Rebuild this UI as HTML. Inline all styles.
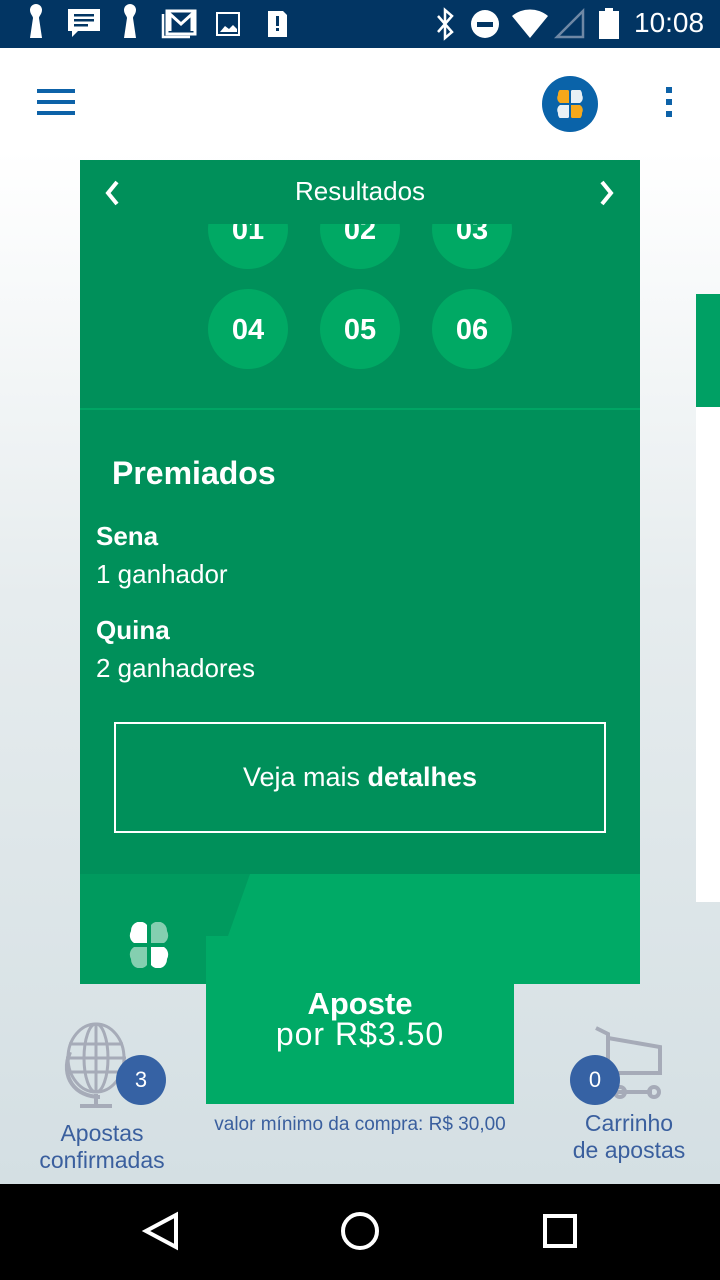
<!DOCTYPE html>
<html><head><meta charset="utf-8"><style>
*{margin:0;padding:0;box-sizing:border-box}
body{width:720px;height:1280px;position:relative;overflow:hidden;font-family:"Liberation Sans",sans-serif;background:linear-gradient(#fff 0,#fff 150px,#e6ecee 600px,#d4dfe3 1184px)}
.abs{position:absolute}
.sb{top:0;left:0;width:720px;height:48px;background:#023563;color:#fff}
.ball{position:absolute;width:80px;height:80px;border-radius:50%;background:#00a964;color:#fff;font-weight:bold;font-size:29px;text-align:center;line-height:82px}
.badge{position:absolute;width:50px;height:50px;border-radius:50%;background:#3662a4;color:#fff;font-size:22px;text-align:center;line-height:50px}
.lbl{position:absolute;color:#3a5f9e;font-size:23px;text-align:center;line-height:27px}
</style></head><body>
<div class="abs sb">
<svg width="720" height="48" class="abs" style="left:0;top:0" fill="#fff">
<path d="M30 10a6 6 0 0 1 12 0c0 4-3 6-3 8l3 20h-12l3-20c0-2-3-4-3-8z"/>
<path d="M68 9h32v22h-22l-6 6v-6h-4z"/><rect x="74" y="14" width="20" height="2.5" fill="#023563"/><rect x="74" y="19" width="20" height="2.5" fill="#023563"/><rect x="74" y="24" width="14" height="2.5" fill="#023563"/>
<path d="M124 10a6 6 0 0 1 12 0c0 4-3 6-3 8l3 20h-12l3-20c0-2-3-4-3-8z"/>
<rect x="167" y="11" width="28" height="23" fill="none" stroke="#fff" stroke-width="3"/><path d="M170 31v-17l11 10 11-10v17" fill="none" stroke="#fff" stroke-width="3"/><path d="M163 14v23h27" fill="none" stroke="#fff" stroke-width="2.5"/>
<rect x="217" y="13" width="22" height="22" fill="none" stroke="#fff" stroke-width="2"/><path d="M220 32l5-6 4 3 4-4 4 4v3z"/>
<path d="M268 11h15l4 4v22h-19z"/><rect x="276" y="16" width="3" height="10" fill="#023563"/><rect x="276" y="28" width="3" height="3" fill="#023563"/>
<path d="M438 16l14 16-7 6v-28l7 6-14 16" fill="none" stroke="#fff" stroke-width="2.5"/>
<circle cx="485" cy="24" r="14"/><rect x="477" y="22" width="16" height="5" fill="#023563"/>
<path d="M512 16a28 28 0 0 1 36 0l-18 22z"/>
<path d="M557 37l26-26v26z" fill="none" stroke="#6f88a5" stroke-width="2.5"/>
<rect x="599" y="11" width="20" height="28"/><rect x="605" y="8" width="8" height="4"/>
</svg>
<div class="abs" style="left:634px;top:7px;font-size:28px;color:#fff">10:08</div>
</div>
<div class="abs" style="left:37px;top:89px;width:38px;height:4px;background:#0d62a8;box-shadow:0 11px 0 #0d62a8,0 22px 0 #0d62a8"></div>
<div class="abs" style="left:542px;top:76px;width:56px;height:56px;border-radius:50%;background:#0a63a9"></div>
<svg class="abs" style="left:556px;top:90px" width="28" height="28"><path d="M13 13V1a6 6 0 0 0-11 4a6 6 0 0 0 2 8z" fill="#f6a81a"/><path d="M15 13V1a6 6 0 0 1 11 4a6 6 0 0 1-2 8z" fill="#e8f0f5"/><path d="M13 15V27a6 6 0 0 1-11-4a6 6 0 0 1 2-8z" fill="#e8f0f5"/><path d="M15 15V27a6 6 0 0 0 11-4a6 6 0 0 0-2-8z" fill="#f6a81a"/></svg>
<div class="abs" style="left:666px;top:87px;width:6px;height:6px;background:#0d62a8;box-shadow:0 12px 0 #0d62a8,0 24px 0 #0d62a8"></div>
<div class="abs" style="left:696px;top:294px;width:24px;height:113px;background:#00a064"></div>
<div class="abs" style="left:696px;top:407px;width:24px;height:495px;background:#fff"></div>
<div class="abs" style="left:80px;top:160px;width:560px;height:824px;background:#00905a;overflow:hidden">
<div class="abs" style="left:0;top:0;width:560px;height:64px;background:#00905a;z-index:2"></div>
<div class="abs" style="left:0;top:16px;width:560px;text-align:center;color:#fff;font-size:26px;z-index:3">Resultados</div>
<svg class="abs" style="left:22px;top:20px;z-index:3" width="520" height="26" fill="none" stroke="#fff" stroke-width="4"><path d="M15 2l-9 11 9 11"/><path d="M500 2l9 11-9 11"/></svg>
<div class="ball" style="left:128px;top:29px">01</div><div class="ball" style="left:240px;top:29px">02</div><div class="ball" style="left:352px;top:29px">03</div>
<div class="ball" style="left:128px;top:129px">04</div><div class="ball" style="left:240px;top:129px">05</div><div class="ball" style="left:352px;top:129px">06</div>
<div class="abs" style="left:0;top:248px;width:560px;height:2px;background:#00a564"></div>
<div class="abs" style="left:32px;top:295px;color:#fff;font-size:32px;font-weight:bold">Premiados</div>
<div class="abs" style="left:16px;top:357px;color:#fff;font-size:26px;line-height:38px"><b>Sena</b><br>1 ganhador</div>
<div class="abs" style="left:16px;top:451px;color:#fff;font-size:26px;line-height:38px"><b>Quina</b><br>2 ganhadores</div>
<div class="abs" style="left:34px;top:562px;width:492px;height:111px;border:2px solid #fff;color:#fff;font-size:27px;text-align:center;line-height:107px">Veja mais <b>detalhes</b></div>
<div class="abs" style="left:0;top:714px;width:560px;height:110px;background:#009a5e"></div>
<svg class="abs" style="left:0;top:714px" width="560" height="110"><path d="M170 0H560V110H126V62H148Z" fill="#00aa66"/></svg>
<svg class="abs" style="left:46px;top:762px" width="46" height="46"><path d="M21 21V3a9 9 0 0 0-16 6a9 9 0 0 0 3 12z" fill="#fff"/><path d="M25 21V3a9 9 0 0 1 16 6a9 9 0 0 1-3 12z" fill="#84cfb0"/><path d="M21 25V43a9 9 0 0 1-16-6a9 9 0 0 1 3-12z" fill="#84cfb0"/><path d="M25 25V43a9 9 0 0 0 16-6a9 9 0 0 0-3-12z" fill="#fff"/></svg>
</div>
<div class="abs" style="left:206px;top:984px;width:308px;height:120px;background:#00aa66"></div>
<div class="abs" style="left:206px;top:984px;width:308px;text-align:center;color:#fff"><div style="font-size:31px;font-weight:bold;margin-top:2px">Aposte</div><div style="font-size:32px;margin-top:-6px;letter-spacing:1px">por R$3.50</div></div>
<div class="abs" style="left:200px;top:1114px;width:320px;text-align:center;color:#3a5f9e;font-size:19px">valor mínimo da compra: R$ 30,00</div>
<svg class="abs" style="left:60px;top:1022px" width="70" height="86" fill="none" stroke="#a6abb8" stroke-width="3"><ellipse cx="36" cy="36" rx="28" ry="34"/><ellipse cx="36" cy="36" rx="12" ry="34"/><path d="M36 2v68M9 22h54M6 36h60M9 50h54"/><path d="M10 30c-10 25 5 45 30 45M36 72v10M20 84h32" stroke-width="4"/></svg>
<div class="badge" style="left:116px;top:1055px">3</div>
<div class="lbl" style="left:20px;top:1120px;width:164px">Apostas<br>confirmadas</div>
<svg class="abs" style="left:594px;top:1026px" width="72" height="76" fill="none" stroke="#a6abb8" stroke-width="4"><path d="M2 2l12 6v58h44"/><path d="M14 12l52 9v26H14"/><circle cx="26" cy="66" r="5"/><circle cx="60" cy="66" r="5"/></svg>
<div class="badge" style="left:570px;top:1055px">0</div>
<div class="lbl" style="left:554px;top:1110px;width:150px">Carrinho<br>de apostas</div>
<div class="abs" style="left:0;top:1184px;width:720px;height:96px;background:#000"></div>
<svg class="abs" style="left:0;top:1184px" width="720" height="96" fill="none" stroke="#fff" stroke-width="4"><path d="M176 31v32l-30-16z"/><circle cx="360" cy="47" r="17"/><rect x="545" y="32" width="30" height="30"/></svg>
</body></html>
